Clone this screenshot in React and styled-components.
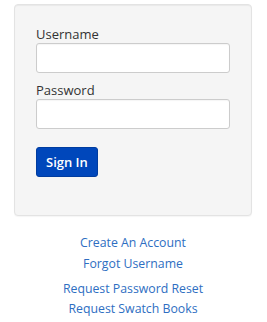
import React from "react";
import styled, { createGlobalStyle } from "styled-components";

const Global = createGlobalStyle`
  html, body { margin: 0; padding: 0; background: #fff; }
  body { font-family: "Open Sans", "Liberation Sans", sans-serif; }
  * { box-sizing: border-box; }
`;

const Page = styled.div`
  padding: 4px 15px 0 14px;
`;

const Card = styled.form`
  background: #f5f5f5;
  border: 1px solid #e3e3e3;
  border-radius: 4px;
  box-shadow: inset 0 1px 1px rgba(0, 0, 0, 0.05), 0 1px 1px rgba(0, 0, 0, 0.04);
  padding: 20px 21px 38px;
  display: flex;
  flex-direction: column;
`;

const Field = styled.div`
  display: flex;
  flex-direction: column;
  margin-bottom: ${(p) => p.$gap}px;
`;

const Label = styled.label`
  font-size: 13px;
  line-height: 18px;
  color: #333;
`;

const Input = styled.input`
  height: 30px;
  width: 100%;
  border: 1px solid #ccc;
  border-radius: 3px;
  background: #fff;
  box-shadow: inset 0 1px 1px rgba(0, 0, 0, 0.04);
  font-family: inherit;
  font-size: 13px;
  padding: 0 8px;
  outline: none;
`;

const Button = styled.button`
  align-self: flex-start;
  height: 30px;
  padding: 0 9px;
  background: #0047bb;
  border: 1px solid #003c9f;
  border-radius: 3px;
  color: #fff;
  font-family: inherit;
  font-size: 13px;
  font-weight: 600;
  cursor: pointer;
`;

const Links = styled.div`
  display: flex;
  flex-direction: column;
  align-items: center;
  padding-top: 16px;
`;

const Link = styled.a`
  font-size: 12.3px;
  line-height: ${(p) => p.$lh}px;
  color: #2e6ec2;
  text-decoration: none;
  margin-top: ${(p) => p.$mt || 0}px;
`;

export default function App() {
  return (
    <>
      <Global />
      <Page>
        <Card onSubmit={(e) => e.preventDefault()}>
          <Field $gap={8}>
            <Label htmlFor="u">Username</Label>
            <Input id="u" type="text" />
          </Field>
          <Field $gap={18}>
            <Label htmlFor="p">Password</Label>
            <Input id="p" type="password" />
          </Field>
          <Button type="submit">Sign In</Button>
        </Card>
        <Links>
          <Link href="#" $lh={21}>Create An Account</Link>
          <Link href="#" $lh={21}>Forgot Username</Link>
          <Link href="#" $lh={20} $mt={5}>Request Password Reset</Link>
          <Link href="#" $lh={20}>Request Swatch Books</Link>
        </Links>
      </Page>
    </>
  );
}
